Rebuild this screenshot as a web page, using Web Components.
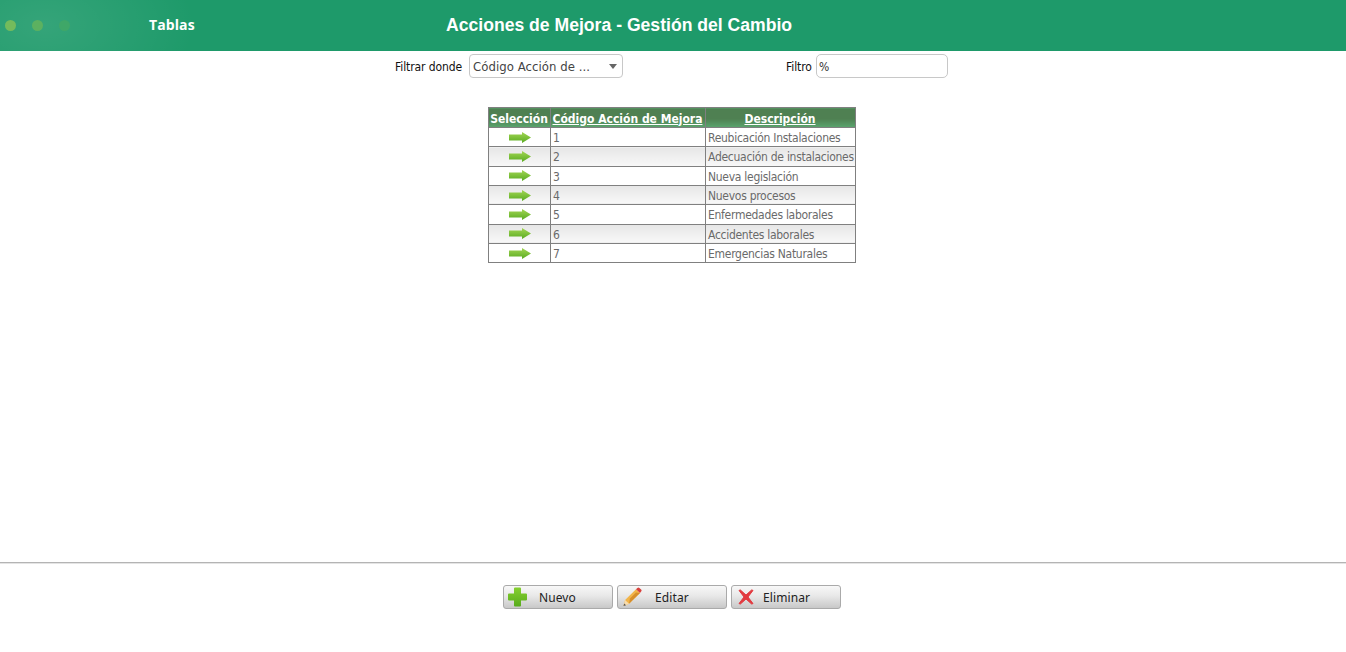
<!DOCTYPE html>
<html lang="es">
<head>
<meta charset="utf-8">
<title>Acciones de Mejora</title>
<style>
  html, body { margin: 0; height: 100%; background: #fff; }
  body { display: flex; flex-direction: column; height: 652px; overflow: hidden; font-family: "DejaVu Sans Condensed", sans-serif; }
</style>
</head>
<body>
<app-header menu="Tablas" heading="Acciones de Mejora - Gestión del Cambio"></app-header>
<filter-bar></filter-bar>
<actions-table></actions-table>
<action-bar>
  <icon-button label="Nuevo" icon="plus" gap="11"></icon-button>
  <icon-button label="Editar" icon="pencil" gap="13"></icon-button>
  <icon-button label="Eliminar" icon="cross" gap="7"></icon-button>
</action-bar>

<script>
class AppHeader extends HTMLElement {
  constructor() {
    super();
    this.attachShadow({ mode: 'open' });
    this.shadowRoot.innerHTML = `
      <style>
        :host {
          display: flex;
          align-items: center;
          flex: none;
          height: 51px;
          color: #fff;
          background:
            radial-gradient(ellipse 150px 90px at 45px 25px, rgba(255,255,255,.1), rgba(255,255,255,0) 100%),
            #1e9a6a;
        }
        .dots { display: flex; gap: 16px; margin-left: 5px; width: 144px; }
        .dots i { width: 11px; height: 11px; border-radius: 50%; }
        .dots i:nth-child(1) { background: #74bb5c; }
        .dots i:nth-child(2) { background: #5cb160; }
        .dots i:nth-child(3) { background: #3fa768; }
        .menu { font: 700 14px "Open Sans", sans-serif; width: 297px; margin-bottom: 2px; letter-spacing: .1px; }
        h1 { margin: 0; font: 700 17.6px "Liberation Sans", sans-serif; }
      </style>
      <div class="dots"><i></i><i></i><i></i></div>
      <div class="menu">${this.getAttribute('menu')}</div>
      <h1>${this.getAttribute('heading')}</h1>
    `;
  }
}
customElements.define('app-header', AppHeader);

class FilterBar extends HTMLElement {
  constructor() {
    super();
    this.attachShadow({ mode: 'open' });
    this.shadowRoot.innerHTML = `
      <style>
        :host {
          display: flex;
          align-items: center;
          flex: none;
          height: 24px;
          margin-top: 3px;
          padding-left: 395px;
          font: 12px "DejaVu Sans Condensed", sans-serif;
          color: #111;
        }
        .select, .input {
          box-sizing: border-box;
          height: 24px;
          border: 1px solid #c8c8c8;
          border-radius: 4px;
          background: #fff;
          display: flex;
          align-items: center;
        }
        .where { width: 67px; letter-spacing: -.1px; white-space: nowrap; padding-top: 2px; }
        .select {
          width: 154px;
          margin-left: 7px;
          padding-left: 3px;
          font-size: 13px;
          letter-spacing: .06px;
          color: #444;
          position: relative;
        }
        .select::after {
          content: "";
          position: absolute;
          right: 5px;
          top: 9px;
          border: 4.5px solid transparent;
          border-top: 5px solid #666;
          border-bottom: 0;
        }
        .filter { width: 26px; margin-left: 163px; letter-spacing: -.1px; padding-top: 2px; }
        .input { width: 132px; margin-left: 4px; padding: 2px 0 0 2px; border-radius: 5px; color: #333; }
      </style>
      <span class="where">Filtrar donde</span>
      <div class="select">Código Acción de ...</div>
      <span class="filter">Filtro</span>
      <div class="input">%</div>
    `;
  }
}
customElements.define('filter-bar', FilterBar);

class ActionsTable extends HTMLElement {
  constructor() {
    super();
    this.attachShadow({ mode: 'open' });
    const rows = ['Reubicación Instalaciones', 'Adecuación de instalaciones', 'Nueva legislación',
      'Nuevos procesos', 'Enfermedades laborales', 'Accidentes laborales', 'Emergencias Naturales'];
    const arrow = `<svg width="22" height="11" viewBox="0 0 22 11"><defs><linearGradient id="g" x1="0" y1="0" x2="0" y2="1"><stop offset="0" stop-color="#a2d653"/><stop offset="1" stop-color="#5aab22"/></linearGradient></defs><path d="M0 2.5h13V0l9 5.5L13 11V8.5H0z" fill="url(#g)"/></svg>`;
    this.shadowRoot.innerHTML = `
      <style>
        :host { display: flex; justify-content: center; flex: none; margin-top: 29px; padding-right: 3px; }
        table {
          border-collapse: collapse;
          table-layout: fixed;
          width: 367px;
          font: 12px "DejaVu Sans Condensed", sans-serif;
          letter-spacing: -.28px;
          color: #6a6a6a;
        }
        th, td {
          box-sizing: border-box;
          border: 1px solid #808080;
          padding: 2px 0 0 2.5px;
          height: 19.33px;
          white-space: nowrap;
        }
        th {
          height: 20px;
          padding: 2px 0 0;
          color: #fff;
          font-weight: 700;
          letter-spacing: 0;
          background: linear-gradient(#4f8052 0, #4f8052 55%, #5aa56e 100%);
          text-align: center;
        }
        th a { color: #fff; text-decoration: underline; }
        td.sel { text-align: center; padding: 0 0 0 2px; line-height: 0; }
        tr:nth-child(even) td { background: linear-gradient(#e6e6e6, #f8f8f8); }
      </style>
      <table>
        <colgroup><col style="width:62px"><col style="width:155px"><col style="width:150px"></colgroup>
        <thead><tr><th>Selección</th><th><a>Código Acción de Mejora</a></th><th><a>Descripción</a></th></tr></thead>
        <tbody>
          ${rows.map((r, i) => `<tr><td class="sel">${arrow}</td><td>${i + 1}</td><td>${r}</td></tr>`).join('')}
        </tbody>
      </table>
    `;
  }
}
customElements.define('actions-table', ActionsTable);

class ActionBar extends HTMLElement {
  constructor() {
    super();
    this.attachShadow({ mode: 'open' });
    this.shadowRoot.innerHTML = `
      <style>
        :host {
          display: flex;
          justify-content: center;
          gap: 4px;
          flex: none;
          margin-top: auto;
          margin-bottom: 43px;
          padding-top: 22px;
          padding-right: 2px;
          border-top: 1px solid #b4b4b4;
          box-shadow: inset 0 1px 0 #e4e4e4;
        }
      </style>
      <slot></slot>
    `;
  }
}
customElements.define('action-bar', ActionBar);

const ICONS = {
  plus: `<svg width="20" height="20" viewBox="0 0 20 20"><defs><linearGradient id="p" x1="0" y1="0" x2="0" y2="1"><stop offset="0" stop-color="#86cf30"/><stop offset="1" stop-color="#58ac1c"/></linearGradient></defs><path d="M7 0.5h5a1 1 0 0 1 1 1v5h5a1 1 0 0 1 1 1v5a1 1 0 0 1-1 1h-5v5a1 1 0 0 1-1 1H7a1 1 0 0 1-1-1v-5H1a1 1 0 0 1-1-1v-5a1 1 0 0 1 1-1h5v-5a1 1 0 0 1 1-1z" fill="url(#p)"/></svg>`,
  pencil: `<svg width="20" height="20" viewBox="0 0 20 20"><path d="M1.5 19l1.6-6L14 2.2l4 3.8L7 16.8z" fill="#f2b54a"/><path d="M8 11.5l6-6 4 .5L7 16.8z" fill="#d78f2c"/><path d="M1.5 19l1.6-6 3.9 3.8z" fill="#f7dcae"/><path d="M1.5 19l.7-2.6 1.9 1.9z" fill="#555"/><path d="M14 2.2l1.4-1.3a1.4 1.4 0 0 1 2 0l1.7 1.7a1.4 1.4 0 0 1 0 2L18 6z" fill="#d8403c"/></svg>`,
  cross: `<svg width="20" height="20" viewBox="0 0 20 20"><path d="M3 3.4L4.4 3 10 8l5.6-5 1.4.4-5 6.6 5 6.6-1.4.4L10 12l-5.6 5-1.4-.4L8 10z" fill="#e23a40" stroke="#e23a40" stroke-linejoin="round"/></svg>`
};

class IconButton extends HTMLElement {
  constructor() {
    super();
    this.attachShadow({ mode: 'open' });
    this.shadowRoot.innerHTML = `
      <style>
        :host {
          display: flex;
          align-items: center;
          box-sizing: border-box;
          width: 110px;
          height: 24px;
          padding-left: 4px;
          border: 1px solid #aaa;
          border-radius: 3px;
          background: linear-gradient(#f8f8f8 0, #e8e8e8 45%, #c8c8c8 100%);
          font: 12px "Noto Sans", sans-serif;
          letter-spacing: .1px;
          color: #222;
        }
        .icon { display: flex; width: 20px; justify-content: center; }
        .text { margin-left: ${this.getAttribute('gap')}px; padding-top: 1px; }
      </style>
      <span class="icon">${ICONS[this.getAttribute('icon')]}</span>
      <span class="text">${this.getAttribute('label')}</span>
    `;
  }
}
customElements.define('icon-button', IconButton);
</script>
</body>
</html>
